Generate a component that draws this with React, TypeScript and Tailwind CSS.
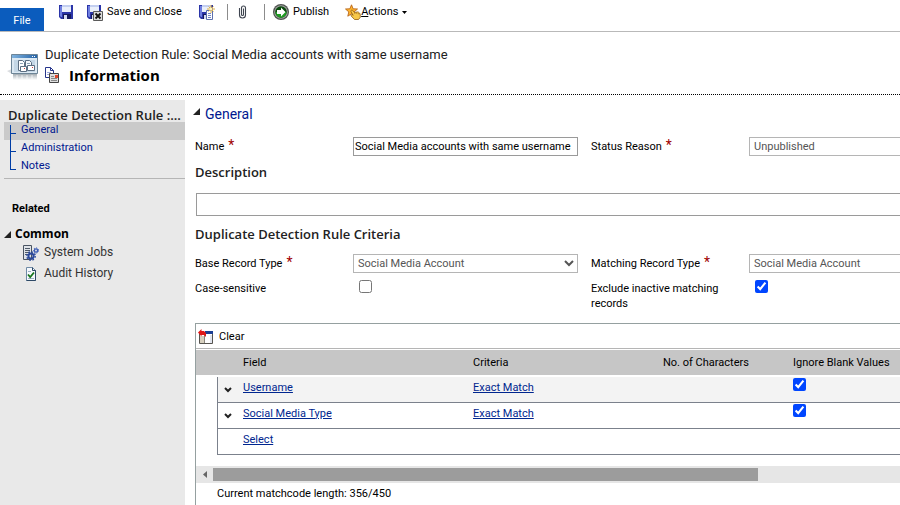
import type { ReactNode } from 'react';
import { clsx } from 'clsx';

function FloppyShape() {
  return (
    <>
      <path d="M1 1h14v14H3l-2-2z" fill="#2b35a8" />
      <path d="M2 2h2v11H3l-1-1z" fill="#6f7fe0" />
      <path d="M4 1h9v7H4z" fill="#e9effb" />
      <path d="M4 1h9v2H4z" fill="#c3cff0" />
      <path d="M5 10h8v5H5z" fill="#151a5c" />
      <path d="M6 11h3v4H6z" fill="#d5dcf2" />
    </>
  );
}

function SaveIcon() {
  return (
    <svg width="16" height="16" viewBox="0 0 16 16" aria-hidden="true">
      <FloppyShape />
    </svg>
  );
}

function SaveCloseIcon() {
  return (
    <svg width="17" height="17" viewBox="0 0 17 17" aria-hidden="true">
      <FloppyShape />
      <path d="M7.500 7.500h9v9h-9z" fill="#dcdcdc" stroke="#5a5a5a" />
      <path d="M9.500 9.500l5 5M14.500 9.500l-5 5" stroke="#111" strokeWidth="1.800" />
    </svg>
  );
}

function SaveNewIcon() {
  return (
    <svg width="17" height="17" viewBox="0 0 17 17" aria-hidden="true">
      <FloppyShape />
      <path d="M8.500 6.500h6v9h-6z" fill="#fff" stroke="#5c6fae" />
      <path d="M10 9.500h3M10 11.500h3M10 13.500h3" stroke="#7386c4" />
      <path d="M13 1v8M9 5h8M10.500 2.500l5 5M15.500 2.500l-5 5" stroke="#e0b040" />
      <circle cx="13" cy="5" r="1.500" fill="#fff4b8" />
    </svg>
  );
}

function ClipIcon() {
  return (
    <svg width="10" height="16" viewBox="0 0 10 16" fill="none" aria-hidden="true">
      <path d="M1.500 4v7a3 3 0 0 0 6 0V4a2 2 0 0 0-4 0v6.500a1 1 0 0 0 2 0V4.500" stroke="#3f4550" strokeWidth="1.100" />
    </svg>
  );
}

function PublishIcon() {
  return (
    <svg width="16" height="16" viewBox="0 0 16 16" aria-hidden="true">
      <circle cx="8" cy="8" r="8" fill="#4f524f" />
      <circle cx="8" cy="8" r="6.800" fill="#a3a6a3" />
      <circle cx="8" cy="8" r="5.800" fill="#0a4a0d" />
      <path d="M2.500 8a5.500 5.500 0 0 0 11 0z" fill="#1f9a22" />
      <path d="M4 6h4V3.500L12.500 8 8 12.500V10H4z" fill="#fff" />
    </svg>
  );
}

function ActionsIcon() {
  return (
    <svg width="16" height="16" viewBox="0 0 16 16" aria-hidden="true">
      <path d="M6.500.8l1.600 4 4.400.2-3.400 2.900 1.100 4.300-3.700-2.400-3.700 2.400 1-4.300L.5 5l4.400-.2z" fill="#ffb52e" stroke="#b8651a" strokeWidth=".9" />
      <path d="M6 6.500c.8-.8 1.600-.4 2.200.4L9.500 8.500l3-.6c1.600.2 2.800 1.600 2.800 3.400v2l-1.800 2.200H9.500L6.200 12c-.6-1 .3-1.700 1.200-1.200l.8.5L6 7.800z" fill="#f7c84a" stroke="#8f5c12" strokeWidth=".8" />
      <path d="M9.800 10v-1.400M11.600 9.800V8.300M13.300 10.300V9" stroke="#9d6a1a" strokeWidth=".7" />
    </svg>
  );
}

function RecordIcon() {
  return (
    <svg width="32" height="28" viewBox="0 0 32 28" className="mt-1 shrink-0" aria-hidden="true">
      <defs>
        <linearGradient id="reflection" x1="0" y1="0" x2="0" y2="1">
          <stop offset="0" stopColor="#8b959d" stopOpacity=".8" />
          <stop offset="1" stopColor="#9aa4ac" stopOpacity="0" />
        </linearGradient>
        <linearGradient id="titlebar" x1="0" y1="0" x2="1" y2="0">
          <stop offset="0" stopColor="#7fb2de" />
          <stop offset="1" stopColor="#2563a6" />
        </linearGradient>
      </defs>
      <path d="M6 21h24v6H6z" fill="url(#reflection)" />
      <path d="M10 22v4M15 22v4M20 22v4M25 22v4" stroke="#fff" opacity=".7" />
      <path d="M0 18l5-2v5z" fill="#bfc5ca" opacity=".6" />
      <path d="M4.500 1.500h26v19h-26z" fill="#dce9f3" stroke="#6d8597" />
      <path d="M5 2h25v3H5z" fill="url(#titlebar)" />
      <path d="M25 3.500h1M27 3.500h1" stroke="#fff" />
      <path d="M7 7h21v12H7z" fill="#c4d7e6" />
      <path d="M11.500 7.500h4l2 2v8h-6z" fill="#fff" stroke="#5d6f82" />
      <path d="M18.500 7.500h4l2 2v6h-6z" fill="#f4f8fc" stroke="#5d6f82" />
      <path d="M13 10.500h3M20 10.500h3" stroke="#8fa4b8" />
      <path d="M13.500 13.500h6v5h-6zM20.500 12.500h7v5h-7z" fill="#fff" stroke="#5d6f82" />
      <path d="M17 15.500h1M25 14.500h1" stroke="#cc3b3b" />
    </svg>
  );
}

function FormIcon() {
  return (
    <svg width="16" height="17" viewBox="0 0 16 17" aria-hidden="true">
      <path d="M.5.5h5l3 3v7h-8z" fill="#fff" stroke="#26358c" />
      <path d="M5.500.5v3h3" fill="none" stroke="#26358c" />
      <path d="M2 5.500h4M2 7.500h4" stroke="#9aa6dc" />
      <path d="M4.500 6.500h9v9h-9z" fill="#dedede" stroke="#444" />
      <path d="M6 9.500h3M6 11.500h6M6 13.500h6" stroke="#888" />
      <path d="M10 8h3v3h-3z" fill="#e0472c" />
    </svg>
  );
}

function SystemJobsIcon() {
  return (
    <svg width="16" height="16" viewBox="0 0 16 16" aria-hidden="true">
      <path d="M.5.500h8v14h-8z" fill="#dfe3e8" stroke="#4a5462" />
      <path d="M2 3.500h5M2 5.500h5M2 7.500h5M2 9.500h3" stroke="#4f5a68" />
      <circle cx="8" cy="11" r="2.600" fill="none" stroke="#2c4a9c" strokeWidth="2" />
      <circle cx="8" cy="11" r="4.200" fill="none" stroke="#2c4a9c" strokeWidth="1.400" strokeDasharray="1.700 1.600" />
      <circle cx="13" cy="5.500" r="1.600" fill="none" stroke="#3b5cb5" strokeWidth="1.400" />
      <circle cx="13" cy="5.500" r="2.600" fill="none" stroke="#3b5cb5" strokeWidth="1" strokeDasharray="1.200 1.200" />
    </svg>
  );
}

function AuditIcon() {
  return (
    <svg width="16" height="16" viewBox="0 0 16 16" aria-hidden="true">
      <path d="M3.500 1.500h6l3 3v10h-9z" fill="#f5f8fc" stroke="#6f8aa6" />
      <path d="M12.500 4.500v10h-9" fill="none" stroke="#2d4866" />
      <path d="M9.500 1.500v3h3" fill="none" stroke="#2d4866" />
      <path d="M5 5.500h3M5 12.500h6" stroke="#9bb0c6" />
      <path d="M5 8.500l2.200 2.500L11 6.500" fill="none" stroke="#17741c" strokeWidth="1.800" />
    </svg>
  );
}

function ClearIcon() {
  return (
    <svg width="16" height="16" viewBox="0 0 16 16" aria-hidden="true">
      <path d="M1.500 3.500h13v11h-13z" fill="#fff" stroke="#56544f" />
      <path d="M7 2h8v3H7z" fill="#1c3f94" />
      <path d="M2 7h4v7H2z" fill="#d8d0bf" />
      <path d="M6 5h1v9H6z" fill="#8a867c" />
      <path d="M12 6h2v8h-2z" fill="#e1e4ee" />
      <path d="M0 3.500L3.500 0v2H6l2 2v4L6 6H3.500v1.500z" fill="#e01818" />
    </svg>
  );
}

function Triangle() {
  return (
    <svg width="7" height="7" viewBox="0 0 7 7" className="shrink-0" aria-hidden="true">
      <path d="M7 0v7H0z" fill="#222" />
    </svg>
  );
}

function Chevron() {
  return (
    <svg width="8" height="6" viewBox="0 0 8 6" aria-hidden="true">
      <path d="M1 1l3 3 3-3" fill="none" stroke="#222" strokeWidth="2" />
    </svg>
  );
}

function Toolbar() {
  return (
    <header className="flex h-8 shrink-0 border-b border-[#b9b9b9] whitespace-nowrap">
      <button type="button" className="mt-2 w-11 shrink-0 bg-[#0b5cbd] pt-0.5 text-white">File</button>
      <div className="flex h-6 items-center pl-3.5">
        <button type="button" aria-label="Save"><SaveIcon /></button>
        <button type="button" className="ml-3 flex items-center gap-1">
          <SaveCloseIcon />
          Save and Close
        </button>
        <button type="button" aria-label="Save and New" className="ml-4"><SaveNewIcon /></button>
        <span className="ml-3 h-4 w-px bg-[#8c8c8c]" />
        <button type="button" aria-label="Attach File" className="ml-2.5"><ClipIcon /></button>
        <span className="ml-4 h-4 w-px bg-[#8c8c8c]" />
        <button type="button" className="ml-2 flex items-center gap-1">
          <PublishIcon />
          Publish
        </button>
        <button type="button" className="ml-4 flex items-center">
          <ActionsIcon />
          <span><u>A</u>ctions</span>
          <svg width="5" height="3" viewBox="0 0 5 3" className="ml-1" aria-hidden="true">
            <path d="M0 0h5L2.500 3z" fill="#000" />
          </svg>
        </button>
      </div>
    </header>
  );
}

const formSections = ['General', 'Administration', 'Notes'];

function Sidebar() {
  return (
    <aside className="w-[185px] shrink-0 bg-[#e9e9e9]">
      <h2 className="h-[22px] pt-[9px] pl-2 font-['Open_Sans',sans-serif] text-[13px] leading-[13px] font-semibold whitespace-nowrap text-[#222]">
        Duplicate Detection Rule :...
      </h2>
      <nav className="ml-1 border-b border-[#b5b5b5] pb-0.5">
        <ul>
          {formSections.map((section, i) => (
            <li key={section} className={clsx('flex h-[18px] pl-1.5', i === 0 && 'bg-[#cacaca]')}>
              <span
                className={clsx(
                  'w-1.5 border-l border-[#003da5]',
                  i === 0 && 'mt-[3px]',
                  i === formSections.length - 1 && 'h-3'
                )}
              >
                <span className={clsx('block border-b border-[#003da5]', i === 0 ? 'h-[9px]' : 'h-3')} />
              </span>
              <a href="#" className="ml-[5px] leading-4 text-[#00188f]">{section}</a>
            </li>
          ))}
        </ul>
      </nav>
      <h3 className="mt-6 pl-3 leading-3 font-bold text-black">Related</h3>
      <h3 className="mt-[11px] flex items-center gap-1 pl-1 font-['Open_Sans',sans-serif] text-[12px] leading-4 font-bold text-black">
        <Triangle />
        Common
      </h3>
      <ul className="text-[12px] leading-[21px] text-[#333]">
        <li><a href="#" className="flex items-center gap-[5px] pl-[23px]"><SystemJobsIcon />System Jobs</a></li>
        <li><a href="#" className="flex items-center gap-[5px] pl-[23px]"><AuditIcon />Audit History</a></li>
      </ul>
    </aside>
  );
}

function FieldLabel({ id, required, children }: { id: string; required?: boolean; children: ReactNode }) {
  return (
    <label htmlFor={id} className="block leading-[15px]">
      {children}
      {required && <span className="ml-1 text-[14px] leading-3 text-[#a00000]">*</span>}
    </label>
  );
}

const selectStyle = 'block h-[19px] w-full border border-[#b5b5b5] bg-white text-[11px] text-[#555]';
const checkStyle = 'block size-[13px] accent-[#0046ff]';

// label / control / label / control, the last one runs past the window edge
const fieldGrid = 'grid grid-cols-[158px_225px_158px_178px]';

const rules = [
  { field: 'Username', criteria: 'Exact Match' },
  { field: 'Social Media Type', criteria: 'Exact Match' },
];

function CriteriaTable() {
  return (
    <table className="mt-px w-full table-fixed border-separate border-spacing-0 text-left">
      <colgroup>
        <col className="w-[21px]" />
        <col className="w-[26px]" />
        <col className="w-[230px]" />
        <col className="w-[190px]" />
        <col className="w-[130px]" />
        <col />
      </colgroup>
      <thead>
        <tr className="h-[27px] bg-[#c6c6c6]">
          <th colSpan={2} className="border-b-2 border-white" />
          <th className="border-b-2 border-white font-normal">Field</th>
          <th className="border-b-2 border-white font-normal">Criteria</th>
          <th className="border-b-2 border-white font-normal">No. of Characters</th>
          <th className="border-b-2 border-white font-normal">Ignore Blank Values</th>
        </tr>
      </thead>
      <tbody>
        {rules.map((rule, i) => {
          const cell = clsx('border-b border-[#7b818c]', i === 0 && 'bg-[#f3f3f3]');
          return (
            <tr key={rule.field} className="h-[26px]">
              <td />
              <td className={clsx(cell, 'border-l pl-1.5')}>
                <button type="button" aria-label={`Options for ${rule.field}`} className="block"><Chevron /></button>
              </td>
              <td className={clsx(cell, 'pb-1')}>
                <a href="#" className="text-[#00268f] underline">{rule.field}</a>
              </td>
              <td className={clsx(cell, 'pb-1')}>
                <a href="#" className="text-[#00268f] underline">{rule.criteria}</a>
              </td>
              <td className={cell} />
              <td className={clsx(cell, 'pt-px align-top')}>
                <input type="checkbox" defaultChecked aria-label={`Ignore blank values for ${rule.field}`} className={checkStyle} />
              </td>
            </tr>
          );
        })}
        <tr className="h-[26px]">
          <td />
          <td className="border-b border-l border-[#7b818c]" />
          <td colSpan={4} className="border-b border-[#7b818c] pb-1">
            <a href="#" className="text-[#00268f] underline">Select</a>
          </td>
        </tr>
      </tbody>
    </table>
  );
}

export default function App() {
  return (
    <div className="flex h-screen flex-col overflow-hidden bg-white font-[Roboto,sans-serif] text-[11px] leading-4 text-black">
      <Toolbar />
      <div className="mb-[5px] flex h-[63px] shrink-0 items-center border-b border-dotted border-black pt-1 pl-[7px]">
        <RecordIcon />
        <div className="pl-1.5">
          <p className="text-[13px] leading-5 text-[#222]">Duplicate Detection Rule: Social Media accounts with same username</p>
          <h1 className="flex items-center gap-2 font-['Open_Sans',sans-serif] text-[15px] leading-5 font-bold">
            <FormIcon />
            Information
          </h1>
        </div>
      </div>
      <div className="flex min-h-0 flex-1">
        <Sidebar />
        <main className="flex min-w-0 flex-1 flex-col overflow-hidden pl-2.5">
          <h2 className="mt-1 -ml-0.5 flex gap-[5px] text-[14px] leading-5 text-[#00188f]">
            <span className="pt-1"><Triangle /></span>
            General
          </h2>
          <div className={clsx(fieldGrid, 'mt-[13px] items-center')}>
            <FieldLabel id="name" required>Name</FieldLabel>
            <input id="name" type="text" defaultValue="Social Media accounts with same username" className="h-[19px] border border-[#9a9a9a] px-px text-[11px]" />
            <div className="pl-[13px]"><FieldLabel id="status" required>Status Reason</FieldLabel></div>
            <div className="pl-[13px]">
              <select id="status" disabled className={selectStyle}><option>Unpublished</option></select>
            </div>
          </div>
          <h3 className="mt-1.5 font-['Open_Sans',sans-serif] text-[13px] leading-5 font-semibold text-[#222]">
            <label htmlFor="description">Description</label>
          </h3>
          <input id="description" type="text" className="mt-[11px] ml-px h-[23px] w-full shrink-0 border border-[#9a9a9a] px-1" />
          <h3 className="mt-2 font-['Open_Sans',sans-serif] text-[13px] leading-5 font-semibold text-[#222]">Duplicate Detection Rule Criteria</h3>
          <div className={clsx(fieldGrid, 'mt-2.5 items-center')}>
            <FieldLabel id="base-type" required>Base Record Type</FieldLabel>
            <select id="base-type" disabled className={selectStyle}><option>Social Media Account</option></select>
            <div className="pl-[13px]"><FieldLabel id="matching-type" required>Matching Record Type</FieldLabel></div>
            <div className="pl-[13px]">
              <select id="matching-type" disabled className={selectStyle}><option>Social Media Account</option></select>
            </div>
          </div>
          <div className={clsx(fieldGrid, 'mt-[7px] items-start')}>
            <div className="pt-px"><FieldLabel id="case">Case-sensitive</FieldLabel></div>
            <div className="pl-1.5"><input id="case" type="checkbox" className={checkStyle} /></div>
            <div className="pt-px pl-[13px]"><FieldLabel id="inactive">Exclude inactive matching records</FieldLabel></div>
            <div className="pl-[19px]"><input id="inactive" type="checkbox" defaultChecked className={checkStyle} /></div>
          </div>
          <section className="mt-3 flex-1 border-t border-l border-[#95a0a0]">
            <div className="flex h-[25px] items-center border-b border-[#b5b5b5] pt-0.5 pl-0.5">
              <button type="button" className="flex items-center gap-[5px]"><ClearIcon />Clear</button>
            </div>
            <CriteriaTable />
            <div className="mt-[11px] flex h-[17px] items-center bg-[#e6e6e6]">
              <button type="button" aria-label="Scroll left" className="flex w-[17px] shrink-0 justify-center">
                <svg width="4" height="7" viewBox="0 0 4 7" aria-hidden="true"><path d="M4 0v7L0 3.500z" fill="#666" /></svg>
              </button>
              <div className="h-[13px] w-[545px] bg-[#9c9c9c]" />
            </div>
            <p className="pt-[3px] pl-[21px]">Current matchcode length: 356/450</p>
          </section>
        </main>
      </div>
    </div>
  );
}
